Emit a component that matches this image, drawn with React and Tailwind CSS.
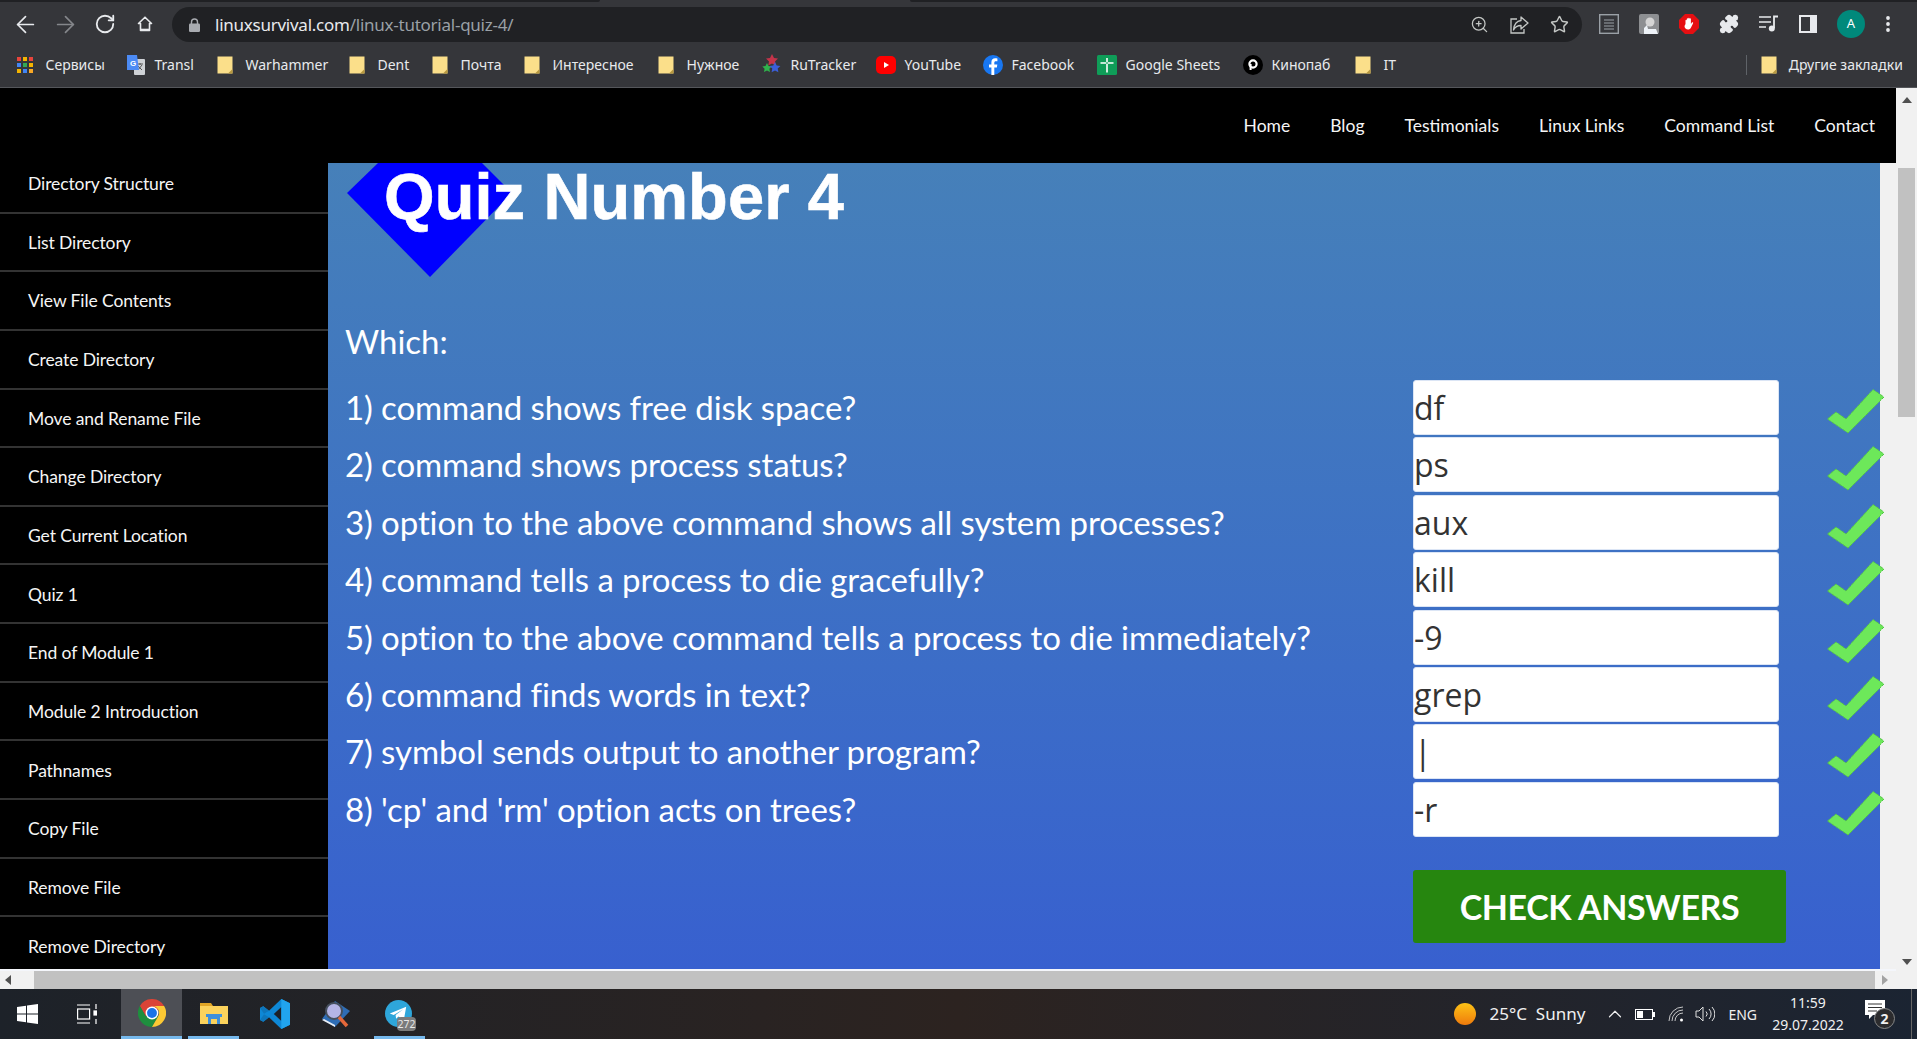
import React from "react";
import { ArrowLeft, ArrowRight, RotateCw, ZoomIn, Star, Puzzle, ChevronUp } from "lucide-react";

const ui = "font-['Noto_Sans',sans-serif]";
const lato = "font-['Lato',sans-serif]";

function Folder() {
  return (
    <svg width="16" height="18" viewBox="0 0 16 18" className="shrink-0">
      <path d="M0.5 0.5H15.5V17.5H0.5Z" fill="#fbdf8a" />
      <path d="M11 17.5L15.5 13V17.5Z" fill="#b7983f" />
    </svg>
  );
}

function AppsGrid() {
  const c = ["#e8453c", "#f4b400", "#e8453c", "#4285f4", "#34a853", "#f4b400", "#f4b400", "#4285f4", "#f9a825"];
  return (
    <svg width="16" height="16" viewBox="0 0 16 16" className="shrink-0">
      {c.map((f, i) => (
        <rect key={i} x={(i % 3) * 6} y={Math.floor(i / 3) * 6} width="4" height="4" fill={f} />
      ))}
    </svg>
  );
}

function TranslateIcon() {
  return (
    <svg width="20" height="22" viewBox="0 0 20 22" className="shrink-0">
      <rect x="8" y="5" width="11" height="16" rx="1" fill="#cfd2d6" />
      <path d="M11 10h6M14 9v2M12 16l4-5M12 12l4 4" stroke="#555" strokeWidth="1" fill="none" />
      <path d="M1 1h10l2 15H1Z" fill="#4c8bf5" />
      <text x="4" y="12" fontSize="8" fill="#fff" fontFamily="Liberation Sans" fontWeight="700">G</text>
    </svg>
  );
}

function RuTrackerIcon() {
  return (
    <svg width="20" height="24" viewBox="0 0 20 24" className="shrink-0">
      <path d="M10 1l2 4 4 .5-3 3 .8 4-3.8-2-3.8 2 .8-4-3-3 4-.5Z" fill="#c4344a" />
      <path d="M5 10l1.5 3 3.2.4-2.3 2.3.6 3.2L5 17.4l-3 1.5.6-3.2L.3 13.4l3.2-.4Z" fill="#2fb24c" />
      <path d="M13 9l1.7 3.4 3.7.5-2.7 2.6.7 3.7-3.4-1.8-3.4 1.8.7-3.7L7.6 13l3.7-.5Z" fill="#3b5ed8" />
    </svg>
  );
}

function YouTubeIcon() {
  return (
    <svg width="20" height="18" viewBox="0 0 20 18" className="shrink-0">
      <rect x="0" y="0" width="20" height="18" rx="5" fill="#f00" />
      <path d="M8 6l5 3-5 3Z" fill="#fff" />
    </svg>
  );
}

function FacebookIcon() {
  return (
    <svg width="20" height="20" viewBox="0 0 20 20" className="shrink-0">
      <circle cx="10" cy="10" r="10" fill="#1877f2" />
      <path d="M11.3 20v-7.5h2.6l.4-3h-3V7.7c0-.9.3-1.5 1.6-1.5h1.5V3.5c-.7-.1-1.4-.2-2.2-.2-2.3 0-3.8 1.4-3.8 3.9v2.3H6v3h2.4V20Z" fill="#fff" />
    </svg>
  );
}

function SheetsIcon() {
  return (
    <svg width="20" height="20" viewBox="0 0 20 20" className="shrink-0">
      <rect width="20" height="20" rx="1.5" fill="#0f9d58" />
      <path d="M3.5 7.2h13v1.6h-13ZM9.2 3v14.500h1.600V3Z" fill="#fff" />
    </svg>
  );
}

function KinoIcon() {
  return (
    <svg width="20" height="20" viewBox="0 0 20 20" className="shrink-0">
      <circle cx="10" cy="10" r="10" fill="#000" />
      <circle cx="10" cy="9" r="3.6" fill="none" stroke="#fff" strokeWidth="2.2" />
      <path d="M6.6 9v6h2V9Z" fill="#fff" />
    </svg>
  );
}

function Bookmark({ w, icon, label }) {
  return (
    <div className={`flex items-center shrink-0 ${w}`}>
      <div className="w-[28.5px] shrink-0 flex items-center">{icon}</div>
      <span className="whitespace-nowrap">{label}</span>
    </div>
  );
}

function Toolbar() {
  return (
    <div className="h-[42px] bg-[#35363a] flex items-start relative">
      <div className="absolute left-0 top-0 w-[600px] h-[2px] bg-[#202124] rounded-br-[3px]" />
      <div className="absolute right-0 top-0 w-[1007px] h-[2px] bg-[#202124] rounded-bl-[3px]" />
      <div className="flex items-center h-[42px] pt-[6px] text-[#e8eaed] shrink-0">
        <div className="w-[16px] ml-[17px] flex justify-center"><ArrowLeft size={27} strokeWidth={1.5} className="shrink-0" /></div>
        <div className="w-[16px] ml-[24px] flex justify-center text-[#85878b]"><ArrowRight size={27} strokeWidth={1.5} className="shrink-0" /></div>
        <div className="w-[16px] ml-[24px] flex justify-center"><RotateCw size={22} strokeWidth={2} className="shrink-0" /></div>
        <div className="w-[16px] ml-[24px] flex justify-center">
          <svg width="16" height="16" viewBox="0 0 16 16" fill="none" stroke="#e8eaed" strokeWidth="1.600" className="shrink-0">
            <path d="M8 1.200L1.500 7.500H3.500V14.400H12.500V7.500H14.500Z" strokeLinejoin="round" />
            <path d="M3.500 13.700H12.500" strokeWidth="2" />
          </svg>
        </div>
      </div>
      <div className={`ml-[19px] mt-[7px] h-[35px] w-[1410px] rounded-full bg-[#202124] flex items-center shrink-0 ${ui}`}>
        <svg width="11" height="14" viewBox="0 0 11 14" className="ml-[17px] shrink-0">
          <path d="M2.500 6V4a3 3 0 0 1 6 0v2" fill="none" stroke="#a8abb0" strokeWidth="1.400" />
          <rect x="0" y="5.500" width="11" height="8.500" rx="1.200" fill="#a8abb0" />
        </svg>
        <div className="ml-[15px] text-[17px] tracking-[-0.25px] whitespace-nowrap">
          <span className="text-[#e8eaed]">linuxsurvival.com</span>
          <span className="text-[#9aa0a6]">/linux-tutorial-quiz-4/</span>
        </div>
        <div className="ml-auto flex items-center gap-[21px] pr-[13px] text-[#c4c7c5]">
          <ZoomIn size={19} strokeWidth={1.6} />
          <svg width="19" height="19" viewBox="0 0 19 19" fill="none" stroke="#c4c7c5" strokeWidth="1.300">
            <path d="M7 4H1V18H14V14" />
            <path d="M11 2L18 8L11 14V10.500C7.500 10.500 5 12 3.500 15C4 10 6.500 6 11 5.500Z" strokeLinejoin="round" />
          </svg>
          <Star size={19} strokeWidth={1.8} />
        </div>
      </div>
      <div className="flex items-center h-[42px] pt-[6px] ml-[17px] gap-[20px] shrink-0">
        <svg width="20" height="20" viewBox="0 0 20 20">
          <rect x="0.7" y="0.7" width="18.6" height="18.6" fill="none" stroke="#9aa0a6" strokeWidth="1.4" />
          <path d="M5 6h10M5 9h10M5 12h10M5 15h10" stroke="#9aa0a6" strokeWidth="1.2" />
        </svg>
        <svg width="20" height="20" viewBox="0 0 20 20">
          <rect width="20" height="20" rx="2" fill="#8d8f92" />
          <circle cx="11" cy="8" r="4.5" fill="#d5d5d5" />
          <path d="M5 20v-6l3-3 1 4h8l2 5Z" fill="#eef3f8" />
        </svg>
        <svg width="20" height="20" viewBox="0 0 20 20">
          <path d="M6 0h8l6 6v8l-6 6H6l-6-6V6Z" fill="#e60f12" />
          <path d="M6.5 10V6.5c0-1 1.3-1 1.3 0V5c0-1 1.4-1 1.4 0v-.6c0-1 1.4-1 1.4 0V5c0-1 1.3-1 1.3 0v5l1-1.4c.6-.8 1.6 0 1.1.8l-2 4c-.7 1.4-1.6 2.1-3 2.1-2 0-3.5-1.3-3.5-3.5Z" fill="#fff" />
        </svg>
        <Puzzle size={20} className="text-[#e8eaed]" fill="#e8eaed" />
        <svg width="20" height="18" viewBox="0 0 20 18">
          <path d="M0 2h12M0 7h12M0 12h7" stroke="#e8eaed" strokeWidth="1.6" />
          <path d="M15 13V1.5h4" stroke="#e8eaed" strokeWidth="1.8" fill="none" />
          <circle cx="12.8" cy="13.5" r="3" fill="#e8eaed" />
        </svg>
        <svg width="18" height="18" viewBox="0 0 18 18">
          <rect x="1" y="1" width="16" height="16" fill="none" stroke="#e8eaed" strokeWidth="2" />
          <rect x="11" y="1" width="6" height="16" fill="#e8eaed" />
        </svg>
        <div className={`w-[28px] h-[28px] rounded-full bg-[#00897b] text-white text-[13px] flex items-center justify-center ${ui}`}>A</div>
        <svg width="4" height="16" viewBox="0 0 4 16" className="ml-[1px]">
          <circle cx="2" cy="2" r="1.9" fill="#e8eaed" />
          <circle cx="2" cy="8" r="1.9" fill="#e8eaed" />
          <circle cx="2" cy="14" r="1.9" fill="#e8eaed" />
        </svg>
      </div>
    </div>
  );
}

function BookmarksBar() {
  return (
    <div className={`h-[46px] bg-[#35363a] border-b border-[#55575b] flex items-center pl-[17px] text-[14px] text-[#e8eaed] ${ui}`}>
      <Bookmark w="w-[109px]" icon={<AppsGrid />} label="Сервисы" />
      <Bookmark w="w-[91px]" icon={<TranslateIcon />} label="Transl" />
      <Bookmark w="w-[132px]" icon={<Folder />} label="Warhammer" />
      <Bookmark w="w-[83px]" icon={<Folder />} label="Dent" />
      <Bookmark w="w-[92px]" icon={<Folder />} label="Почта" />
      <Bookmark w="w-[134px]" icon={<Folder />} label="Интересное" />
      <Bookmark w="w-[104px]" icon={<Folder />} label="Нужное" />
      <Bookmark w="w-[114px]" icon={<RuTrackerIcon />} label="RuTracker" />
      <Bookmark w="w-[107px]" icon={<YouTubeIcon />} label="YouTube" />
      <Bookmark w="w-[114px]" icon={<FacebookIcon />} label="Facebook" />
      <Bookmark w="w-[146px]" icon={<SheetsIcon />} label="Google Sheets" />
      <Bookmark w="w-[112px]" icon={<KinoIcon />} label="Кинопаб" />
      <Bookmark w="w-[60px]" icon={<Folder />} label="IT" />
      <div className="ml-auto flex items-center pr-[14px]">
        <div className="w-px h-[20px] bg-[#5f6368] mr-[14px]" />
        <div className="w-[28px] flex items-center"><Folder /></div>
        <span className="whitespace-nowrap">Другие закладки</span>
      </div>
    </div>
  );
}

const NAV = ["Home", "Blog", "Testimonials", "Linux Links", "Command List", "Contact"];
const SIDE = [
  "Directory Structure", "List Directory", "View File Contents", "Create Directory",
  "Move and Rename File", "Change Directory", "Get Current Location", "Quiz 1",
  "End of Module 1", "Module 2 Introduction", "Pathnames", "Copy File", "Remove File", "Remove Directory",
];
const QUIZ = [
  ["1) command shows free disk space?", "df"],
  ["2) command shows process status?", "ps"],
  ["3) option to the above command shows all system processes?", "aux"],
  ["4) command tells a process to die gracefully?", "kill"],
  ["5) option to the above command tells a process to die immediately?", "-9"],
  ["6) command finds words in text?", "grep"],
  ["7) symbol sends output to another program?", "|"],
  ["8) 'cp' and 'rm' option acts on trees?", "-r"],
];

function Check() {
  return (
    <svg width="58" height="45" viewBox="0 0 58 45" className="shrink-0 ml-[48px] mt-[10px]">
      <path d="M0.5 30L9 23L19 30L46 0.5L57 8L21 44Z" fill="#6de85a" stroke="#55c447" strokeWidth="1" strokeDasharray="3 1.5" />
    </svg>
  );
}

function Page() {
  return (
    <div className={`flex-1 min-w-0 bg-[#f1f1f1] flex flex-col overflow-hidden ${lato}`}>
      <div className="h-[67px] shrink-0 bg-black flex items-end justify-end gap-[40px] pr-[21px] pb-[16px] text-[17.5px] text-[#f5f5f5]">
        {NAV.map((n) => <span key={n} className="whitespace-nowrap">{n}</span>)}
      </div>
      <div className="flex flex-1 min-h-0">
        <div className="w-[328px] shrink-0 bg-black">
          {SIDE.map((s) => (
            <div key={s} className="h-[58.65px] flex items-center pt-[2px] pl-[28px] text-[17.5px] tracking-[-0.1px] text-[#f5f5f5] border-b-2 border-[#333]">
              {s}
            </div>
          ))}
        </div>
        <div className="flex-1 flex flex-col min-w-0">
          <div className="h-[8px] bg-black shrink-0" />
          <div className="w-[1552px] h-[806px] bg-linear-to-b from-[#4680b9] to-[#3860cf] relative shrink-0">
            <svg width="166" height="114" viewBox="0 0 166 114" className="absolute left-[19px] top-0">
              <polygon points="31,0 135,0 165,30 83,114 0,30" fill="#0000ff" />
            </svg>
            <h1 className="relative h-[140px] pl-[56px] font-['Liberation_Sans',sans-serif] font-bold text-[65px] leading-[68px] tracking-[0.1px] [-webkit-text-stroke:0.6px_white] text-white whitespace-nowrap">
              Quiz Number 4
            </h1>
            <div className="h-[76px] pl-[17px] text-[33px] leading-[76px] text-white">Which:</div>
            {QUIZ.map(([q, a]) => (
              <div key={q} className="h-[57.4px] flex items-start">
                <div className="w-[1085px] pl-[17px] text-[33px] leading-[57px] tracking-[-0.1px] text-white whitespace-nowrap shrink-0">{q}</div>
                <div className="w-[366px] h-[55px] mt-px pt-[1px] bg-white rounded-[3px] border border-[#dbe5f5] flex items-center text-[32px] text-[#333] shrink-0 font-['Open_Sans',sans-serif]">
                  {a}
                </div>
                <Check />
              </div>
            ))}
            <button className="block ml-[1085px] mt-[32px] w-[373px] h-[73px] rounded-[3px] bg-[#26860f] text-white font-bold text-[34px] tracking-[-0.4px]">
              CHECK ANSWERS
            </button>
          </div>
        </div>
      </div>
      <div className="h-[2px] shrink-0 bg-[#f4f6fb]" />
    </div>
  );
}

function VScrollbar() {
  return (
    <div className="w-[21px] shrink-0 bg-[#f1f1f1] flex flex-col items-center">
      <svg width="10" height="6" viewBox="0 0 10 6" className="mt-[9px] shrink-0"><path d="M0 6L5 0L10 6Z" fill="#505050" /></svg>
      <div className="mt-[65px] w-[17px] h-[249px] bg-[#c1c1c1] shrink-0" />
      <svg width="10" height="6" viewBox="0 0 10 6" className="mt-auto mb-[6px] shrink-0"><path d="M0 0L5 6L10 0Z" fill="#505050" /></svg>
    </div>
  );
}

function HScrollbar() {
  return (
    <div className="h-[18px] shrink-0 bg-[#f1f1f1] flex items-center">
      <svg width="6" height="10" viewBox="0 0 6 10" className="ml-[5px]"><path d="M6 0L0 5L6 10Z" fill="#505050" /></svg>
      <div className="ml-[23px] w-[1841px] h-[18px] bg-[#c1c1c1]" />
      <svg width="6" height="10" viewBox="0 0 6 10" className="ml-[7px]"><path d="M0 0L6 5L0 10Z" fill="#a3a3a3" /></svg>
    </div>
  );
}

function ChromeLogo() {
  return (
    <svg width="28" height="28" viewBox="0 0 48 48">
      <path d="M24 24L44.8 12A24 24 0 0 0 3.2 12L13.6 30Z" fill="#db4437" />
      <path d="M24 24L34.4 30L24 48A24 24 0 0 1 3.2 12L13.6 30Z" fill="#1e8e3e" />
      <path d="M24 12H44.8A24 24 0 0 1 24 48L34.4 30A12 12 0 0 0 24 12Z" fill="#fcc934" />
      <circle cx="24" cy="24" r="11" fill="#fff" />
      <circle cx="24" cy="24" r="8.5" fill="#1a73e8" />
    </svg>
  );
}

function Taskbar() {
  return (
    <div className={`h-[50px] shrink-0 bg-linear-to-r from-[#1d2229] via-[#2c2320] to-[#1b2432] flex items-stretch text-[#f0f0f0] ${ui}`}>
      <div className="w-[77px] flex items-center pl-[17px] shrink-0">
        <svg width="21" height="20" viewBox="0 0 21 20">
          <path d="M0 3l9-1.300v7.800H0ZM10 1.500L21 0v9.500H10ZM0 10.500h9v7.800L0 17ZM10 10.500h11V20l-11-1.500Z" fill="#fff" />
        </svg>
      </div>
      <div className="w-[44px] flex items-center shrink-0">
        <svg width="20" height="20" viewBox="0 0 20 20" fill="none" stroke="#fff" strokeWidth="1.200">
          <path d="M0 1h13M0 19h13" />
          <rect x="0.600" y="5" width="12" height="10" />
          <path d="M19 0v5M19 15v5" />
          <rect x="17" y="7" width="3" height="4" fill="#fff" />
        </svg>
      </div>
      <div className="w-[61px] bg-[#4d4f55] border-b-[3px] border-[#76b9ed] flex items-center justify-center shrink-0"><ChromeLogo /></div>
      <div className="w-[51px] ml-[6px] border-b-[3px] border-[#76b9ed] flex items-center justify-center shrink-0">
        <svg width="28" height="24" viewBox="0 0 28 24">
          <path d="M0 2h11l2 3H0Z" fill="#e0a526" />
          <path d="M0 5h28v18H0Z" fill="#fbd25c" />
          <path d="M8 13h12v10h-3v-5h-6v5H8Z" fill="#3d8fdc" />
          <path d="M6 13h16v3H6Z" fill="#3d8fdc" />
        </svg>
      </div>
      <div className="w-[46px] ml-[13px] flex items-center justify-center shrink-0">
        <svg width="30" height="30" viewBox="0 0 100 100">
          <path d="M71 0L100 14V86L71 100L30 61L11 76L0 70V30L11 24L30 39Z" fill="#0e88d6" />
          <path d="M71 27L46 50L71 73Z" fill="#1d2229" />
          <path d="M0 30L11 24L30 39L12 50L30 61L11 76L0 70L14 50Z" fill="#0e76bb" />
          <path d="M71 0L100 14V86L71 100Z" fill="#21a4ee" />
        </svg>
      </div>
      <div className="w-[76px] flex items-center justify-center shrink-0">
        <svg width="30" height="30" viewBox="0 0 30 30">
          <path d="M1 20L14 2L29 12L14 28Z" fill="#2e6db5" />
          <path d="M3 20L14 26L14 28L1 21Z" fill="#e8edf5" />
          <circle cx="13" cy="12" r="8" fill="#b5b5e6" stroke="#46505e" strokeWidth="2" />
          <path d="M18 18L26 27" stroke="#e5683a" strokeWidth="3.500" />
        </svg>
      </div>
      <div className="w-[51px] border-b-[3px] border-[#76b9ed] relative shrink-0 flex items-start pt-[11px] pl-[11px]">
        <svg width="27" height="27" viewBox="0 0 28 28">
          <circle cx="14" cy="14" r="14" fill="#2ea6da" />
          <path d="M5 14L22 7L19.500 21L14 17L11.500 19.500L11 15.500L19 9.500L9 15.500Z" fill="#fff" />
        </svg>
        <span className="absolute left-[23px] top-[28px] w-[19px] h-[14px] leading-[14px] rounded-[4px] bg-[#7b7b7b] text-[10.5px] text-center text-[#e8e8e8]">272</span>
      </div>
      <div className="ml-auto flex items-center pr-[5px]">
        <div className="w-[22px] h-[22px] rounded-full bg-linear-to-b from-[#fcc216] to-[#ee7a0c] mr-[14px]" />
        <span className="text-[17px] whitespace-nowrap mr-[19px]">25°C&nbsp; Sunny</span>
        <ChevronUp size={22} strokeWidth={1.3} className="mr-[9px]" />
        <svg width="20" height="11" viewBox="0 0 20 11" className="mr-[13px]">
          <rect x="0.500" y="0.500" width="17" height="10" fill="none" stroke="#fff" />
          <rect x="2" y="2" width="6" height="7" fill="#fff" />
          <rect x="18" y="3" width="2" height="5" fill="#fff" />
        </svg>
        <svg width="16" height="16" viewBox="0 0 16 16" fill="none" stroke="#d8d8d8" strokeWidth="0.900" className="mr-[11px]">
          <path d="M1 15A14 14 0 0 1 15 1M4 15A11 11 0 0 1 15 4M7 15A8 8 0 0 1 15 7" />
          <circle cx="13.500" cy="14" r="1.500" fill="#fff" stroke="none" />
        </svg>
        <svg width="20" height="18" viewBox="0 0 20 18" fill="none" stroke="#e0e0e0" strokeWidth="1" className="mr-[13px]">
          <path d="M1 6h3l4-4v14l-4-4H1Z" />
          <path d="M11 6.500a3.500 3.500 0 0 1 0 5M14 4a7 7 0 0 1 0 10M17 2a10 10 0 0 1 0 14" />
        </svg>
        <span className="text-[14px] mr-[12px]">ENG</span>
        <div className="w-[78px] flex flex-col items-center text-[14px] leading-[22px] mr-[18px]">
          <span>11:59</span>
          <span>29.07.2022</span>
        </div>
        <div className="relative w-[24px] h-[28px] mr-[22px]">
          <svg width="20" height="19" viewBox="0 0 20 19" className="absolute left-0 top-0">
            <path d="M0 0h20v15H8l-4 4v-4H0Z" fill="#fff" />
            <path d="M3 4h14M3 7.500h14M3 11h9" stroke="#333" strokeWidth="1" />
          </svg>
          <span className="absolute left-[9px] top-[8px] w-[21px] h-[21px] rounded-full bg-[#2c2c2e] border border-[#888] text-[14px] font-bold leading-[19px] text-center">2</span>
        </div>
        <div className="w-px h-full bg-[#666]" />
      </div>
    </div>
  );
}

export default function App() {
  return (
    <div className="w-[1917px] h-[1039px] overflow-hidden flex flex-col bg-[#f1f1f1]">
      <Toolbar />
      <BookmarksBar />
      <div className="flex flex-1 min-h-0">
        <Page />
        <VScrollbar />
      </div>
      <HScrollbar />
      <Taskbar />
    </div>
  );
}
